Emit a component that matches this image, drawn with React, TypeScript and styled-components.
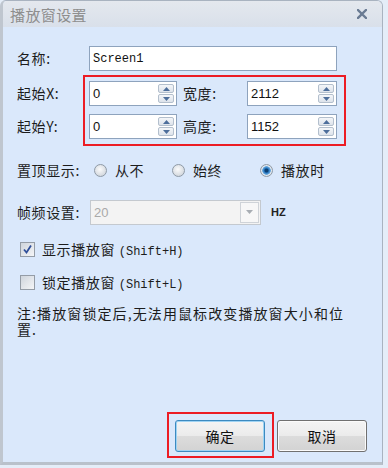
import React from "react";
import styled, { createGlobalStyle } from "styled-components";

const GlobalStyle = createGlobalStyle`
  html, body { margin: 0; padding: 0; }
  body {
    background: #e4edf8;
    font-family: "Liberation Mono", "Noto Sans CJK SC", monospace;
  }
  #root { width: 388px; height: 468px; }
`;

const cjk = `"Noto Sans CJK SC", "Liberation Sans", sans-serif`;

const Window = styled.div`
  width: 383px;
  height: 465px;
  box-sizing: border-box;
  display: flex;
  flex-direction: column;
  border: 1px solid #a9b3c0;
  border-left: 3px solid #bfc6cf;
  border-bottom: 3px solid #b9c1cb;
  border-radius: 6px 6px 0 0;
  overflow: hidden;
  background: #dae8fb;
`;

const TitleBar = styled.div`
  height: 26px;
  flex: none;
  display: flex;
  align-items: center;
  justify-content: space-between;
  padding: 0 15px 0 7px;
  background: linear-gradient(#e4e8ee, #d9e0ea);
`;

const Title = styled.span`
  font-family: ${cjk};
  font-size: 15px;
  color: #8e8e8e;
  letter-spacing: 0.4px;
`;

const CloseIcon = () => (
  <svg width="10" height="10" viewBox="0 0 10 10">
    <path d="M1 1 L9 9 M9 1 L1 9" stroke="#6a7b93" strokeWidth="2.4" strokeLinecap="square" />
  </svg>
);

const Content = styled.div`
  flex: 1;
  display: flex;
  flex-direction: column;
  padding: 0 0 4px 14px;
  font-family: ${cjk};
  font-size: 14px;
  color: #1c1c1c;
  letter-spacing: 0.6px;
`;

const Row = styled.div<{ $top: number; $h?: number }>`
  display: flex;
  align-items: center;
  margin-top: ${(p) => p.$top}px;
  height: ${(p) => p.$h ?? 25}px;
`;

const Label = styled.span<{ $w: number }>`
  width: ${(p) => p.$w}px;
  flex: none;
  line-height: 25px;
  white-space: nowrap;
`;

const TextBox = styled.div<{ $w: number }>`
  width: ${(p) => p.$w}px;
  height: 25px;
  box-sizing: border-box;
  border: 1px solid #8ea3bd;
  background: #fff;
  display: flex;
  align-items: center;
  padding-left: 3px;
  font-family: "Liberation Mono", monospace;
  font-size: 12px;
  letter-spacing: 0;
  color: #111;
`;

const Coords = styled.div`
  display: flex;
  margin-top: 4px;
`;

const LabelCol = styled.div`
  width: 66px;
  display: flex;
  flex-direction: column;
  gap: 8px;
  padding-top: 6px;
`;

const RedBox = styled.div`
  border: 2px solid #ec1c24;
  padding: 4px 7px 5px 4px;
  display: grid;
  grid-template-columns: 88px 70px 90px;
  grid-auto-rows: 25px;
  row-gap: 8px;
  align-items: center;
`;

const InnerLabel = styled.span`
  padding-left: 6px;
  line-height: 25px;
`;

const SpinBox = styled(TextBox)`
  justify-content: space-between;
  padding-right: 2px;
  font-family: "Liberation Sans", sans-serif;
  font-size: 13px;
`;

const SpinButtons = styled.div`
  display: flex;
  flex-direction: column;
  gap: 1px;
`;

const SpinBtn = styled.div`
  width: 16px;
  height: 9px;
  box-sizing: border-box;
  border: 1px solid #b3bfcd;
  border-radius: 2px;
  background: linear-gradient(#f4f6f9, #dde3eb);
  display: flex;
  align-items: center;
  justify-content: center;
`;

const Arrow = ({ up }: { up?: boolean }) => (
  <svg width="7" height="4" viewBox="0 0 7 4">
    <path d={up ? "M0 4 L3.5 0 L7 4 Z" : "M0 0 L3.5 4 L7 0 Z"} fill="#4d6e9b" />
  </svg>
);

const Spin = ({ value, w }: { value: string; w: number }) => (
  <SpinBox $w={w}>
    <span>{value}</span>
    <SpinButtons>
      <SpinBtn>
        <Arrow up />
      </SpinBtn>
      <SpinBtn>
        <Arrow />
      </SpinBtn>
    </SpinButtons>
  </SpinBox>
);

const RadioOpt = styled.div<{ $w?: number }>`
  display: flex;
  align-items: center;
  gap: 8px;
  width: ${(p) => (p.$w ? `${p.$w}px` : "auto")};
  flex: none;
`;

const RadioCircle = styled.span<{ $on?: boolean }>`
  width: 13px;
  height: 13px;
  box-sizing: border-box;
  border-radius: 50%;
  border: 1px solid #8f9aa6;
  background: ${(p) =>
    p.$on
      ? "radial-gradient(circle, #0b3f73 0 1.5px, #2a7bc4 2.5px, #6aa8dc 4px, #e9eef3 4.6px, #cfd6de 6px)"
      : "radial-gradient(circle at 45% 40%, #fbfbfb, #d3d8de 75%)"};
`;

const Select = styled.div`
  width: 171px;
  height: 25px;
  box-sizing: border-box;
  border: 1px solid #c4c9cf;
  background: #f3f3f3;
  display: flex;
  align-items: center;
  justify-content: space-between;
  padding: 0 1px 0 3px;
  font-family: "Liberation Sans", sans-serif;
  font-size: 13px;
  letter-spacing: 0;
  color: #a9a9a9;
`;

const DropBtn = styled.div`
  width: 19px;
  height: 21px;
  box-sizing: border-box;
  border: 1px solid #cfd3d8;
  background: #f7f7f7;
  display: flex;
  align-items: center;
  justify-content: center;
`;

const Unit = styled.span`
  margin-left: 10px;
  font-family: "Liberation Sans", sans-serif;
  font-size: 11px;
  font-weight: bold;
  letter-spacing: 0;
  color: #222;
`;

const CheckRow = styled(Row)`
  padding-left: 3px;
  gap: 7px;
`;

const CheckBox = styled.span`
  width: 15px;
  height: 15px;
  box-sizing: border-box;
  border: 1px solid #949ca6;
  background: linear-gradient(135deg, #cfd5dc, #f4f5f7);
  display: flex;
  align-items: center;
  justify-content: center;
`;

const Latin = styled.span`
  font-family: "Liberation Mono", monospace;
  font-size: 12px;
  letter-spacing: 0;
`;

const Note = styled.p`
  margin: 11px 0 0;
  width: 336px;
  line-height: 16px;
  letter-spacing: 1.1px;
`;

const Footer = styled.div`
  margin-top: auto;
  display: flex;
  justify-content: flex-end;
  align-items: flex-start;
  padding-right: 15px;
`;

const Highlight = styled.div`
  border: 2px solid #ec1c24;
  padding: 6px 7px 4px 6px;
`;

const Button = styled.div<{ $focus?: boolean }>`
  width: 90px;
  height: 32px;
  box-sizing: border-box;
  border-radius: 3px;
  border: 1px solid ${(p) => (p.$focus ? "#3c8ac0" : "#707070")};
  box-shadow: ${(p) => (p.$focus ? "inset 0 0 0 1px #9fd3f3" : "inset 0 0 0 1px #fbfbfb")};
  background: linear-gradient(#f4f4f4 0%, #ebebeb 50%, #dcdcdc 51%, #d3d3d3 100%);
  display: flex;
  align-items: center;
  justify-content: center;
  font-size: 14px;
  color: #111;
  margin-top: ${(p) => (p.$focus ? 0 : 8)}px;
  margin-left: ${(p) => (p.$focus ? 0 : 3)}px;
`;

export default function App() {
  return (
    <>
      <GlobalStyle />
      <Window>
        <TitleBar>
          <Title>播放窗设置</Title>
          <CloseIcon />
        </TitleBar>
        <Content>
          <Row $top={19}>
            <Label $w={72}>名称:</Label>
            <TextBox $w={248}>Screen1</TextBox>
          </Row>
          <Coords>
            <LabelCol>
              <Label $w={66}>起始X:</Label>
              <Label $w={66}>起始Y:</Label>
            </LabelCol>
            <RedBox>
              <Spin value="0" w={88} />
              <InnerLabel>宽度:</InnerLabel>
              <Spin value="2112" w={90} />
              <Spin value="0" w={88} />
              <InnerLabel>高度:</InnerLabel>
              <Spin value="1152" w={90} />
            </RedBox>
          </Coords>
          <Row $top={12} $h={24}>
            <Label $w={77}>置顶显示:</Label>
            <RadioOpt $w={78}>
              <RadioCircle />
              从不
            </RadioOpt>
            <RadioOpt $w={88}>
              <RadioCircle />
              始终
            </RadioOpt>
            <RadioOpt>
              <RadioCircle $on />
              播放时
            </RadioOpt>
          </Row>
          <Row $top={18} $h={24}>
            <Label $w={73}>帧频设置:</Label>
            <Select>
              <span>20</span>
              <DropBtn>
                <svg width="7" height="4" viewBox="0 0 7 4">
                  <path d="M0 0 L3.5 4 L7 0 Z" fill="#a8adb3" />
                </svg>
              </DropBtn>
            </Select>
            <Unit>HZ</Unit>
          </Row>
          <CheckRow $top={13} $h={24}>
            <CheckBox>
              <svg width="11" height="11" viewBox="0 0 11 11">
                <path d="M2 5.5 L4.5 8.5 L9 1.5" stroke="#2f4f9a" strokeWidth="1.8" fill="none" />
              </svg>
            </CheckBox>
            <span>
              显示播放窗 <Latin>(Shift+H)</Latin>
            </span>
          </CheckRow>
          <CheckRow $top={9} $h={24}>
            <CheckBox />
            <span>
              锁定播放窗 <Latin>(Shift+L)</Latin>
            </span>
          </CheckRow>
          <Note>注:播放窗锁定后,无法用鼠标改变播放窗大小和位置.</Note>
          <Footer>
            <Highlight>
              <Button $focus>确定</Button>
            </Highlight>
            <Button>取消</Button>
          </Footer>
        </Content>
      </Window>
    </>
  );
}
